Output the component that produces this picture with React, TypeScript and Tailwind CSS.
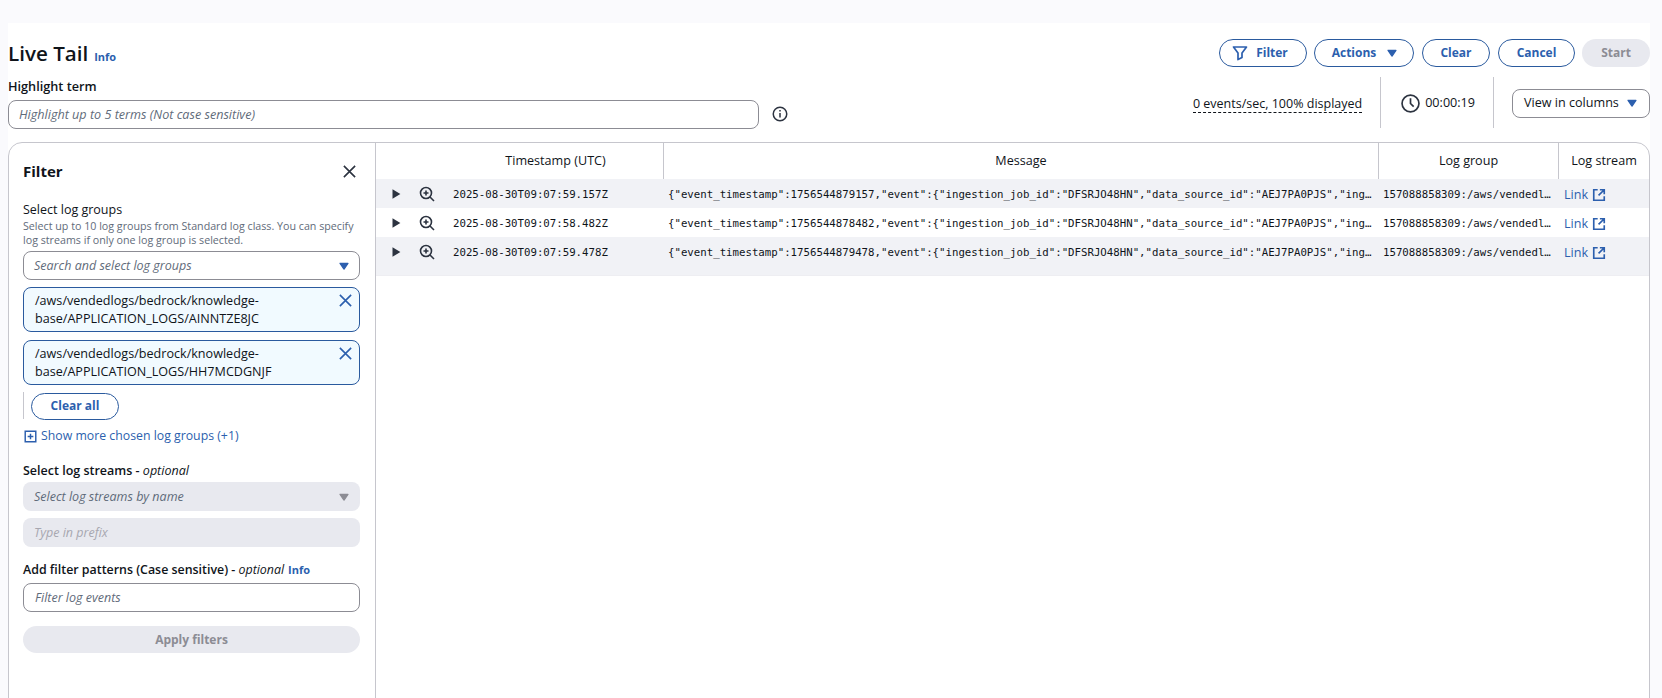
import React from "react";

const sans = { fontFamily: '"Open Sans", "Noto Sans", sans-serif' };

const Caret = ({ className }: { className: string }) => (
  <svg viewBox="0 0 16 16" className={className} fill="currentColor" stroke="currentColor" strokeWidth="1.5" strokeLinejoin="round">
    <path d="M3.5 5h9L8 11.5z" />
  </svg>
);

const Close = ({ className }: { className: string }) => (
  <svg viewBox="0 0 16 16" className={className} fill="none" stroke="currentColor" strokeWidth="1.7">
    <path d="m2 2 12 12M14 2 2 14" />
  </svg>
);

const External = () => (
  <svg viewBox="0 0 16 16" className="w-[14px] h-[14px] text-[#2c5fae]" fill="none" stroke="currentColor" strokeWidth="1.9">
    <path d="M6.5 2H2v12h12V9.5M9 2h5v5M14 2 7.5 8.5" />
  </svg>
);

const Play = () => (
  <svg viewBox="0 0 16 16" className="w-[14px] h-[14px] text-[#2c3340]" fill="currentColor">
    <path d="M4 2.5v11l9-5.5z" />
  </svg>
);

const ZoomIn = () => (
  <svg viewBox="0 0 16 16" className="w-[16px] h-[16px] text-[#2c3340]" fill="none" stroke="currentColor" strokeWidth="1.6">
    <circle cx="7" cy="7" r="5.5" />
    <path d="M7 4.5v5M4.5 7h5M11 11l4 4" />
  </svg>
);

const Divider = ({ h = "h-[51px]" }: { h?: string }) => <div className={`w-px bg-[#c6c6cd] ${h}`} />;

const PillButton = ({ children, className }: { children: React.ReactNode; className: string }) => (
  <button className={`h-[28px] rounded-full border border-[#2a5a9e] text-[#2c5fae] text-[12px] font-bold flex items-center justify-center ${className}`}>
    {children}
  </button>
);

const rows = [
  ["2025-08-30T09:07:59.157Z", "1756544879157", "bg-[#f1f2f6]", "h-[29px]"],
  ["2025-08-30T09:07:58.482Z", "1756544878482", "bg-white", "h-[29px]"],
  ["2025-08-30T09:07:59.478Z", "1756544879478", "bg-[#f1f2f6]", "h-[38px]"],
];

const Chip = ({ line1, line2 }: { line1: string; line2: string }) => (
  <div className="h-[45px] rounded-[8px] border border-[#2a5a9e] bg-[#f1faff] pl-[11px] pr-[6px] pt-[4px] flex justify-between">
    <div className="text-[12.6px] leading-[18px] text-[#0f141a]">
      <div>{line1}</div>
      <div>{line2}</div>
    </div>
    <Close className="w-[15px] h-[15px] mt-[1px] text-[#2c5fae]" />
  </div>
);

export default function App() {
  return (
    <div className="w-[1662px] h-[698px] overflow-hidden bg-[#fafafd] pt-[23px]" style={sans}>
      <div className="ml-[8px] mr-[12px] bg-white h-[675px] overflow-hidden pt-[16px]">
        {/* Title row */}
        <div className="flex items-center justify-between h-[28px]">
          <div className="flex items-baseline gap-[6px]">
            <h1 className="text-[20.6px] leading-[28px] font-semibold text-[#0f141a]">Live Tail</h1>
            <a className="text-[11px] font-bold text-[#2c5fae]">Info</a>
          </div>
          <div className="flex items-center">
            <PillButton className="w-[88px] gap-[8px] pr-[6px]">
              <svg viewBox="0 0 16 16" className="w-[16px] h-[16px]" fill="none" stroke="currentColor" strokeWidth="1.7" strokeLinejoin="round">
                <path d="M1.5 2h13L10 8v4.5l-4 2V8z" />
              </svg>
              Filter
            </PillButton>
            <PillButton className="ml-[7px] w-[100px] gap-[9px] pl-[3px]">
              Actions
              <Caret className="w-[14px] h-[14px]" />
            </PillButton>
            <PillButton className="ml-[8px] w-[68px]">Clear</PillButton>
            <PillButton className="ml-[8px] w-[77px]">Cancel</PillButton>
            <button className="ml-[7px] h-[28px] w-[68px] rounded-full bg-[#e8e9ef] text-[#8c8c94] text-[12px] font-bold">Start</button>
          </div>
        </div>

        {/* Highlight row */}
        <div className="flex justify-between mt-[10px] h-[51px]">
          <div className="flex items-start">
            <div>
              <div className="text-[12.7px] leading-[18px] font-semibold text-[#0f141a]">Highlight term</div>
              <div className="w-[751px] h-[29px] mt-[5px] rounded-[8px] border border-[#8c8c94] pl-[10px] pt-[1px] flex items-center text-[12.6px] italic text-[#5f6b7a]">
                Highlight up to 5 terms (Not case sensitive)
              </div>
            </div>
            <svg viewBox="0 0 16 16" className="w-[16px] h-[16px] ml-[13px] mt-[29px] text-[#2c3340]" fill="none" stroke="currentColor" strokeWidth="1.5">
              <circle cx="8" cy="8" r="6.75" />
              <path d="M8 7v4.5M8 4v1.6" />
            </svg>
          </div>
          <div className="flex items-center">
            <span className="mt-[2px] text-[12.5px] text-[#0f141a] border-b border-dashed border-[#0f141a] leading-[17px]">0 events/sec, 100% displayed</span>
            <div className="ml-[18px]"><Divider /></div>
            <svg viewBox="0 0 18 18" className="w-[19px] h-[19px] ml-[20px] mt-[2px] text-[#2c3340]" fill="none" stroke="currentColor" strokeWidth="1.6">
              <circle cx="9" cy="9" r="8" />
              <path d="M9 4v5l3 3" />
            </svg>
            <span className="ml-[5px] mt-[1px] text-[12.6px] text-[#0f141a]">00:00:19</span>
            <div className="ml-[18px]"><Divider /></div>
            <div className="ml-[18px] mt-[1px] w-[138px] h-[29px] rounded-[8px] border border-[#8c8c94] pl-[11px] pr-[10px] flex items-center justify-between text-[12.6px] text-[#0f141a]">
              View in columns
              <Caret className="w-[14px] h-[14px] text-[#2c5fae]" />
            </div>
          </div>
        </div>

        {/* Main panel */}
        <div className="mt-[14px] w-[1642px] h-[600px] rounded-t-[14px] border border-[#c6c6cd] flex overflow-hidden">
          {/* Filter panel */}
          <aside className="w-[367px] shrink-0 border-r border-[#c6c6cd] pl-[14px] pr-[15px]">
            <div className="flex items-center justify-between h-[20px] mt-[18px]">
              <h2 className="text-[15px] font-bold text-[#0f141a]">Filter</h2>
              <Close className="w-[15px] h-[15px] mr-[3px] text-[#2c3340]" />
            </div>
            <div className="mt-[20px] text-[12.5px] leading-[18px] text-[#0f141a]">Select log groups</div>
            <p className="text-[10.7px] leading-[14px] text-[#5f6b7a] whitespace-nowrap">
              Select up to 10 log groups from Standard log class. You can specify<br />log streams if only one log group is selected.
            </p>
            <div className="mt-[4px] h-[29px] rounded-[8px] border border-[#8c8c94] pl-[10px] pr-[8px] pt-[1px] flex items-center justify-between text-[12.5px] italic text-[#5f6b7a]">
              Search and select log groups
              <Caret className="w-[14px] h-[14px] text-[#2c5fae]" />
            </div>
            <div className="mt-[7px] flex flex-col gap-[8px]">
              <Chip line1="/aws/vendedlogs/bedrock/knowledge-" line2="base/APPLICATION_LOGS/AINNTZE8JC" />
              <Chip line1="/aws/vendedlogs/bedrock/knowledge-" line2="base/APPLICATION_LOGS/HH7MCDGNJF" />
            </div>
            <div className="mt-[7px] h-[27px] border-l border-[#c6c6cd] pl-[7px]">
              <button className="w-[88px] h-[27px] rounded-full border border-[#2a5a9e] text-[12px] font-bold text-[#2c5fae] pb-[1px]">Clear all</button>
            </div>
            <div className="mt-[8px] flex items-center h-[18px] text-[12.3px] text-[#2c5fae]">
              <svg viewBox="0 0 16 16" className="w-[13px] h-[13px] ml-[1px] mr-[4px]" fill="none" stroke="currentColor" strokeWidth="1.8">
                <path d="M1.5 1.5h13v13h-13zM8 4.5v7M4.5 8h7" />
              </svg>
              Show more chosen log groups (+1)
            </div>
            <div className="mt-[17px] text-[12.5px] leading-[18px] font-semibold text-[#0f141a]">
              Select log streams - <em className="font-medium">optional</em>
            </div>
            <div className="mt-[2px] h-[29px] rounded-[8px] bg-[#e8e9ef] pl-[11px] pr-[9px] pt-[1px] flex items-center justify-between text-[12.5px] italic text-[#5f6b7a]">
              Select log streams by name
              <Caret className="w-[14px] h-[14px] text-[#8c8c94]" />
            </div>
            <div className="mt-[7px] h-[29px] rounded-[8px] bg-[#e8e9ef] pl-[11px] pt-[1px] flex items-center text-[12.5px] italic text-[#a7a7b0]">
              Type in prefix
            </div>
            <div className="mt-[14px] flex items-baseline text-[12.4px] leading-[18px] font-semibold text-[#0f141a]">
              <span>Add filter patterns (Case sensitive) - <em className="font-medium">optional</em></span>
              <a className="ml-[4px] text-[11px] font-bold text-[#2c5fae]">Info</a>
            </div>
            <div className="mt-[4px] h-[29px] rounded-[8px] border border-[#8c8c94] pl-[11px] pt-[1px] flex items-center text-[12.5px] italic text-[#5f6b7a]">
              Filter log events
            </div>
            <button className="mt-[14px] w-full h-[27px] rounded-full bg-[#e8e9ef] text-[12px] font-bold text-[#8c8c94]">Apply filters</button>
          </aside>

          {/* Table */}
          <section className="flex-1 min-w-0">
            <div className="flex h-[36px] text-[12.6px] text-[#0f141a]">
              <div className="w-[288px] pl-[72px] pt-[1px] border-r border-[#c6c6cd] flex items-center justify-center">Timestamp (UTC)</div>
              <div className="w-[715px] pt-[1px] border-r border-[#c6c6cd] flex items-center justify-center">Message</div>
              <div className="w-[180px] pt-[1px] border-r border-[#c6c6cd] flex items-center justify-center">Log group</div>
              <div className="flex-1 pt-[1px] flex items-center justify-center">Log stream</div>
            </div>
            {rows.map(([ts, ev, bg, h]) => (
              <div key={ts} className={`flex ${bg} ${h} text-[10.72px] leading-[31px] text-[#0f141a]`} style={{ fontFamily: '"DejaVu Sans Mono", monospace' }}>
                <div className="w-[288px] flex items-center h-[31px]">
                  <span className="ml-[13px] -mt-[2px]"><Play /></span>
                  <span className="ml-[16px] -mt-[2px]"><ZoomIn /></span>
                  <span className="ml-[18px] whitespace-nowrap">{ts}</span>
                </div>
                <div className="w-[715px] pl-[4px] pr-[2px] truncate">{`{"event_timestamp":${ev},"event":{"ingestion_job_id":"DFSRJO48HN","data_source_id":"AEJ7PA0PJS","ingestion_job_status":"STARTED"}}`}</div>
                <div className="w-[180px] pl-[4px] pr-[6px] truncate">157088858309:/aws/vendedlogs/bedrock</div>
                <div className="flex-1 pl-[5px] h-[31px] flex items-center gap-[4px] text-[12.6px] text-[#2c5fae]" style={sans}>
                  Link <External />
                </div>
              </div>
            ))}
            <div className="h-px bg-[#eeeef2]" />
          </section>
        </div>
      </div>
    </div>
  );
}
